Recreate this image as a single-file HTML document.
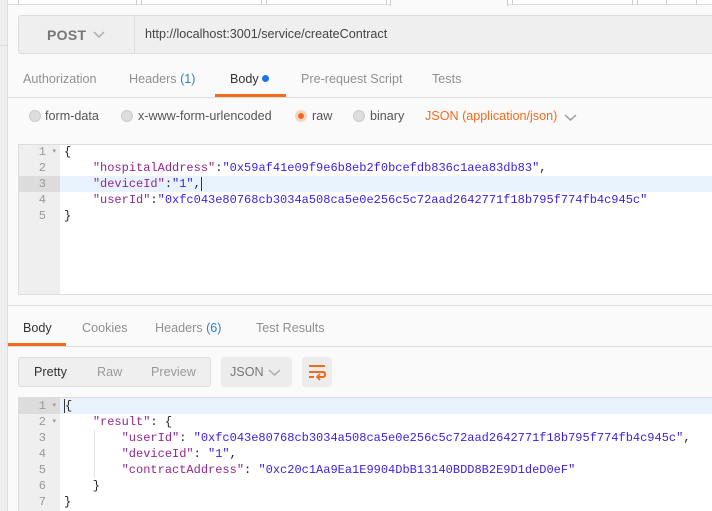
<!DOCTYPE html>
<html><head><style>
*{margin:0;padding:0;box-sizing:border-box}
body{width:712px;height:511px;overflow:hidden;background:#fafafa;font-family:"Liberation Sans",sans-serif;position:relative;font-size:12.6px;color:#505050}
.a{position:absolute;white-space:nowrap}
.g{color:#909090}
.ln{position:absolute;width:42px;text-align:right;padding-right:14px;color:#999;font-family:"Liberation Mono",monospace;font-size:12px;height:16px;line-height:16px}
.cl{position:absolute;height:16px;line-height:16px;font-family:"Liberation Mono",monospace;font-size:12px;color:#222;white-space:pre}
.k{color:#92278f}.s{color:#3b1ee0}
.r{position:absolute;width:12px;height:12px;border-radius:50%;background:#ddd;border:1px solid #ccc}
</style></head><body>
<div class="a" style="left:0;top:0;width:8px;height:511px;background:#eee;border-right:1px solid #ddd"></div>
<div class="a" style="left:0;top:45px;width:8px;height:1px;background:#ddd"></div>
<div class="a" style="left:8px;top:0;width:704px;height:5px;background:#fff;border-bottom:1px solid #ddd"></div>
<div class="a" style="left:18px;top:0;width:1px;height:5px;background:#ccc"></div>
<div class="a" style="left:136px;top:0;width:1px;height:5px;background:#ccc"></div>
<div class="a" style="left:141px;top:0;width:1px;height:5px;background:#ccc"></div>
<div class="a" style="left:261px;top:0;width:1px;height:5px;background:#ccc"></div>
<div class="a" style="left:266px;top:0;width:1px;height:5px;background:#ccc"></div>
<div class="a" style="left:386px;top:0;width:1px;height:5px;background:#ccc"></div>
<div class="a" style="left:390px;top:0;width:118px;height:6px;background:#fafafa;border-left:1px solid #ccc;border-right:1px solid #ccc"></div>
<div class="a" style="left:512px;top:0;width:1px;height:5px;background:#ccc"></div>
<div class="a" style="left:632px;top:0;width:1px;height:5px;background:#ccc"></div>
<div class="a" style="left:637px;top:0;width:1px;height:5px;background:#ccc"></div>
<div class="a" style="left:666px;top:0;width:1px;height:5px;background:#ccc"></div>
<div class="a" style="left:696px;top:0;width:1px;height:5px;background:#ccc"></div>

<div class="a" style="left:18px;top:15px;width:700px;height:39px;background:#efefef;border:1px solid #ddd;border-radius:3px"></div>
<div class="a" style="left:134px;top:16px;width:1px;height:37px;background:#ddd"></div>
<div class="a" style="left:47px;top:27px;font-size:14px;color:#777;font-weight:bold;letter-spacing:.3px">POST</div>
<svg class="a" style="left:93px;top:31px" width="12" height="8"><path d="M1 1L6 6L11 1" fill="none" stroke="#aaa" stroke-width="1.4"/></svg>
<div class="a" style="left:145px;top:27px;color:#444">http://localhost:3001/service/createContract</div>

<div class="a g" style="left:23px;top:72px">Authorization</div>
<div class="a g" style="left:129px;top:72px">Headers <span style="color:#2d7fd6">(1)</span></div>
<div class="a" style="left:230px;top:72px;color:#333">Body <span style="display:inline-block;width:7px;height:7px;border-radius:50%;background:#1a73e8;vertical-align:1px"></span></div>
<div class="a g" style="left:301px;top:72px">Pre-request Script</div>
<div class="a g" style="left:432px;top:72px">Tests</div>
<div class="a" style="left:8px;top:97px;width:704px;height:1px;background:#ddd"></div>
<div class="a" style="left:215px;top:94px;width:71px;height:3px;background:#f26b1d"></div>

<div class="r" style="left:29px;top:110px"></div>
<div class="a" style="left:45px;top:109px;color:#555">form-data</div>
<div class="r" style="left:121px;top:110px"></div>
<div class="a" style="left:138px;top:109px;color:#555">x-www-form-urlencoded</div>
<div class="r" style="left:295px;top:110px;background:#f26b1d;border:3px solid #f5d7c5"></div>
<div class="a" style="left:312px;top:109px;color:#555">raw</div>
<div class="r" style="left:353px;top:110px"></div>
<div class="a" style="left:370px;top:109px;color:#555">binary</div>
<div class="a" style="left:425px;top:109px;color:#f26b1d">JSON (application/json)</div>
<svg class="a" style="left:564px;top:114px" width="13" height="8"><path d="M1 1L6.5 6L12 1" fill="none" stroke="#999" stroke-width="1.4"/></svg>

<div class="a" style="left:18px;top:144px;width:700px;height:151px;background:#fff;border:1px solid #ddd"></div>
<div class="a" style="left:19px;top:145px;width:41px;height:149px;background:#efefef"></div>
<div class="a" style="left:60px;top:176px;width:652px;height:16px;background:#e8f2fd"></div>
<div class="a" style="left:19px;top:176px;width:41px;height:16px;background:#dcdcdc"></div>
<div class="ln" style="left:18px;top:144px">1<span style="position:absolute;right:4px;font-size:7px">▾</span></div>
<div class="ln" style="left:18px;top:160px">2</div>
<div class="ln" style="left:18px;top:176px">3</div>
<div class="ln" style="left:18px;top:192px">4</div>
<div class="ln" style="left:18px;top:208px">5</div>
<div class="cl" style="left:64px;top:144px">{</div>
<div class="cl" style="left:64px;top:160px">    <span class="k">"hospitalAddress"</span>:<span class="s">"0x59af41e09f9e6b8eb2f0bcefdb836c1aea83db83"</span>,</div>
<div class="cl" style="left:64px;top:176px">    <span class="k">"deviceId"</span>:<span class="s">"1"</span>,<span style="border-left:1px solid #333"></span></div>
<div class="cl" style="left:64px;top:192px">    <span class="k">"userId"</span>:<span class="s">"0xfc043e80768cb3034a508ca5e0e256c5c72aad2642771f18b795f774fb4c945c"</span></div>
<div class="cl" style="left:64px;top:208px">}</div>

<div class="a" style="left:8px;top:305px;width:704px;height:1px;background:#ddd"></div>
<div class="a" style="left:23px;top:321px;color:#333">Body</div>
<div class="a g" style="left:82px;top:321px">Cookies</div>
<div class="a g" style="left:155px;top:321px">Headers <span style="color:#2d7fd6">(6)</span></div>
<div class="a g" style="left:256px;top:321px">Test Results</div>
<div class="a" style="left:8px;top:346px;width:704px;height:1px;background:#ddd"></div>
<div class="a" style="left:8px;top:343px;width:58px;height:3px;background:#f26b1d"></div>

<div class="a" style="left:18px;top:357px;width:193px;height:30px;background:#efefef;border:1px solid #ddd;border-radius:3px"></div>
<div class="a" style="left:34px;top:365px;color:#333">Pretty</div>
<div class="a" style="left:97px;top:365px;color:#999">Raw</div>
<div class="a" style="left:151px;top:365px;color:#999">Preview</div>
<div class="a" style="left:221px;top:357px;width:71px;height:30px;background:#ececec;border-radius:3px"></div>
<div class="a" style="left:230px;top:365px;color:#777">JSON</div>
<svg class="a" style="left:268px;top:369px" width="13" height="8"><path d="M1 1L6.5 6L12 1" fill="none" stroke="#aaa" stroke-width="1.4"/></svg>
<div class="a" style="left:302px;top:357px;width:30px;height:30px;background:#ececec;border-radius:3px"></div>
<svg class="a" style="left:307px;top:363px" width="20" height="18"><path d="M2 3H18M2 9H16Q18 9 18 11.5Q18 14 16 14H11M2 14H7" fill="none" stroke="#f26b1d" stroke-width="2"/><path d="M13 11L10 14L13 17" fill="none" stroke="#f26b1d" stroke-width="1.6"/></svg>

<div class="a" style="left:18px;top:397px;width:694px;height:114px;background:#fff;border-top:1px solid #ddd;border-left:1px solid #ddd"></div>
<div class="a" style="left:19px;top:398px;width:41px;height:113px;background:#efefef"></div>
<div class="a" style="left:60px;top:398px;width:652px;height:16px;background:#e8f2fd"></div>
<div class="a" style="left:19px;top:398px;width:41px;height:16px;background:#dcdcdc"></div>
<div class="ln" style="left:18px;top:398px">1<span style="position:absolute;right:4px;font-size:7px">▾</span></div>
<div class="ln" style="left:18px;top:414px">2<span style="position:absolute;right:4px;font-size:7px">▾</span></div>
<div class="ln" style="left:18px;top:430px">3</div>
<div class="ln" style="left:18px;top:446px">4</div>
<div class="ln" style="left:18px;top:462px">5</div>
<div class="ln" style="left:18px;top:478px">6</div>
<div class="ln" style="left:18px;top:494px">7</div>
<div class="a" style="left:94px;top:430px;width:1px;height:48px;background:#e4e4e4"></div>
<div class="cl" style="left:64px;top:398px"><span style="border-left:1px solid #333"></span>{</div>
<div class="cl" style="left:64px;top:414px">    <span class="k">"result"</span>: {</div>
<div class="cl" style="left:64px;top:430px">        <span class="k">"userId"</span>: <span class="s">"0xfc043e80768cb3034a508ca5e0e256c5c72aad2642771f18b795f774fb4c945c"</span>,</div>
<div class="cl" style="left:64px;top:446px">        <span class="k">"deviceId"</span>: <span class="s">"1"</span>,</div>
<div class="cl" style="left:64px;top:462px">        <span class="k">"contractAddress"</span>: <span class="s">"0xc20c1Aa9Ea1E9904DbB13140BDD8B2E9D1deD0eF"</span></div>
<div class="cl" style="left:64px;top:478px">    }</div>
<div class="cl" style="left:64px;top:494px">}</div>
</body></html>
